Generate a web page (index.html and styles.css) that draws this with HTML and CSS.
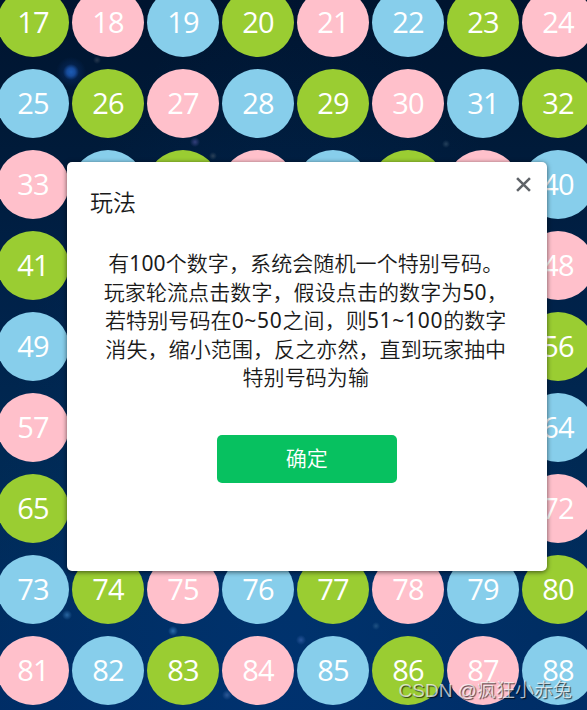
FILE: index.html
```
<!DOCTYPE html>
<html lang="zh-CN">
<head>
    <meta charset="UTF-8">
    <meta name="viewport" content="width=device-width, initial-scale=1.0">
    <title>数字游戏</title>
    <link rel="stylesheet" href="styles.css">
</head>
<body>
    <div class="board" id="board"></div>

    <div class="mask">
        <div class="dialog">
            <div class="dialog-header">
                <h3 class="title">玩法</h3>
                <svg class="close" viewBox="0 0 14 14">
                    <path d="M1 1 L13 13 M13 1 L1 13"/>
                </svg>
            </div>
            <p class="rule">
                有<span class="num">100</span>个数字，系统会随机一个特别号码。<br>
                玩家轮流点击数字，假设点击的数字为<span class="num">50</span>，<br>
                若特别号码在<span class="num range">0~50</span>之间，则<span class="num range">51~100</span>的数字<br>
                消失，缩小范围，反之亦然，直到玩家抽中<br>
                特别号码为输
            </p>
            <button class="confirm" type="button">确定</button>
        </div>
    </div>

    <div class="watermark">CSDN @疯狂小赤兔</div>

    <script>
        // 三种颜色循环
        const colors = ["pink", "blue", "green"];
        const board = document.getElementById("board");
        for (let i = 17; i <= 88; i++) {
            const ball = document.createElement("div");
            ball.className = "ball " + colors[i % 3];
            ball.textContent = i;
            board.appendChild(ball);
        }
    </script>
</body>
</html>
```
FILE: styles.css
```
* {
    box-sizing: border-box;
}
body {
    margin: 0;
    height: 710px;
    overflow: hidden;
    font-family: "Noto Sans", "Noto Sans CJK SC", sans-serif;
    /* 星空背景 */
    background:
        radial-gradient(circle at 71px 72px, #1c5cb4 0, #174c9c 4px, rgba(10, 50, 115, 0.35) 8px, transparent 15px),
        radial-gradient(circle at 97px 60px, #26384f 0, transparent 4px),
        radial-gradient(circle at 195px 142px, #33407c 0, transparent 5px),
        radial-gradient(circle at 213px 156px, #2b4158 0, transparent 4px),
        radial-gradient(circle at 446px 144px, #24405b 0, transparent 4px),
        radial-gradient(circle at 67px 615px, #2865a0 0, transparent 5px),
        radial-gradient(circle at 173px 631px, #2b6cab 0, transparent 5px),
        radial-gradient(circle at 227px 695px, #2b5796 0, transparent 5px),
        radial-gradient(circle at 301px 640px, #28559a 0, transparent 5px),
        radial-gradient(circle at 376px 626px, #1f5183 0, transparent 4px),
        radial-gradient(ellipse at 290px 640px, rgba(0, 60, 130, 0.35) 0, transparent 300px),
        linear-gradient(#00142f 0, #001a38 130px, #002148 280px, #002a55 480px, #002d60 600px, #002d66 710px);
}
.board {
    display: grid;
    grid-template-columns: repeat(8, 72px);
    grid-auto-rows: 69px;
    gap: 12px 3px;
    margin: -12px 0 0 -3px;
}
.ball {
    border-radius: 50%;
    color: #fff;
    font-family: "Open Sans", "Noto Sans", sans-serif;
    font-size: 29px;
    font-weight: 450;
    line-height: 67px;
    letter-spacing: -0.9px;
    text-align: center;
}
.green {
    background-color: yellowgreen;
}
.pink {
    background-color: pink;
}
.blue {
    background-color: skyblue;
}
.mask {
    position: absolute;
    top: 0;
    left: 0;
    width: 100%;
    padding: 162px 0 0 67px;
}
.dialog {
    width: 479.5px;
    height: 409px;
    padding: 0 24px;
    border-radius: 5px;
    background-color: #fff;
    box-shadow: 0 1px 5px rgba(0, 0, 0, 0.6);
    color: #1a1a1a;
    text-align: center;
}
.dialog-header {
    display: flex;
    justify-content: space-between;
    align-items: flex-start;
}
.title {
    margin: 23px 0 0 -1px;
    font-size: 23px;
    line-height: 34px;
    font-weight: 350;
}
.close {
    width: 15px;
    height: 15px;
    margin: 15px -8px 0 0;
    fill: none;
    stroke: #5f6368;
    stroke-width: 2.4;
}
.rule {
    margin: 30px 0 0 -2px;
    font-size: 21px;
    line-height: 28.5px;
    font-weight: 350;
    letter-spacing: 0.1px;
    white-space: nowrap;
}
.num {
    font-weight: 400;
}
.range {
    letter-spacing: 0.7px;
}
.confirm {
    width: 180px;
    height: 48px;
    margin: 43px 0 0;
    padding: 0 0 3px;
    border: none;
    border-radius: 5px;
    background-color: #07c160;
    color: #fff;
    font-family: inherit;
    font-size: 21px;
    font-weight: 350;
}
.watermark {
    position: absolute;
    right: 15px;
    bottom: 5px;
    color: rgba(255, 255, 255, 0.7);
    font-family: "Liberation Sans", "Noto Sans CJK SC", sans-serif;
    font-size: 19px;
    line-height: 28px;
    font-weight: 350;
    text-shadow: 1px 1px 1px rgba(0, 0, 0, 0.7);
}
```
